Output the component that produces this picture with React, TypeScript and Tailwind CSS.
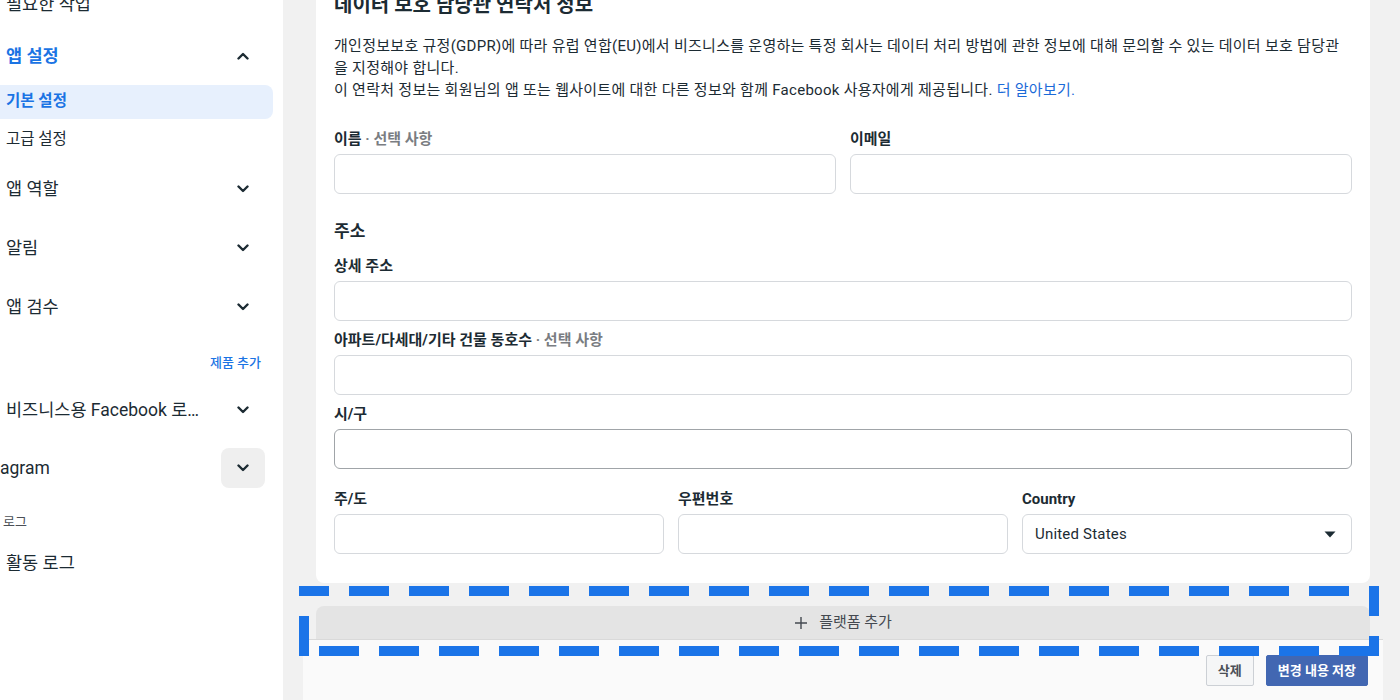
import React from "react";

const font = "font-['Roboto','Noto_Sans_CJK_KR',sans-serif]";

function Chevron({ up = false }: { up?: boolean }) {
  return (
    <svg width="12" height="8" viewBox="0 0 12 8" className={up ? "rotate-180" : ""}>
      <path d="M1.5 1.5 L6 6 L10.5 1.5" fill="none" stroke="#1c2b33" strokeWidth="2.4" strokeLinecap="round" strokeLinejoin="round" />
    </svg>
  );
}

function NavRow({
  label,
  className = "",
  box = false,
  up = false,
  textClass = "text-[17.5px] text-[#1c2b33]",
}: {
  label: string;
  className?: string;
  box?: boolean;
  up?: boolean;
  textClass?: string;
}) {
  return (
    <div className={`flex items-center justify-between pr-[18px] ${className}`}>
      <span className={`whitespace-nowrap ${textClass}`}>{label}</span>
      <div className={`w-[44px] h-[40px] flex items-center justify-center rounded-lg ${box ? "bg-[#efefef]" : ""}`}>
        <Chevron up={up} />
      </div>
    </div>
  );
}

function Label({ text, optional = false }: { text: string; optional?: boolean }) {
  return (
    <div className="h-[21px] pt-px leading-[20px] text-[15px] font-bold text-[#1c2b33] mb-[5px] whitespace-nowrap">
      {text}
      {optional && <span className="font-semibold text-[#7a7d82]"> · 선택 사항</span>}
    </div>
  );
}

function Field({ dark = false }: { dark?: boolean }) {
  return (
    <div
      className={`h-[40px] rounded-md bg-white border ${dark ? "border-[#a0a4a8]" : "border-[#d6d9dd]"}`}
    />
  );
}

function Sidebar() {
  return (
    <aside className="w-[283px] shrink-0 bg-white h-[700px] overflow-hidden">
      <div className="-mt-[8px]">
        <div className="h-[24px] pl-[6px] flex items-center text-[17.5px] text-[#1c2b33] whitespace-nowrap">필요한 작업</div>
        <NavRow
          label="앱 설정"
          up
          className="mt-[18px] h-[44px] pl-[6px]"
          textClass="text-[17.5px] font-bold text-[#1b74e4]"
        />
        <div className="mt-[7px] mr-[10px] h-[34px] rounded-r-lg bg-[#e7f0fd] pl-[6px] flex items-center text-[15.5px] font-bold text-[#1b74e4]">
          기본 설정
        </div>
        <div className="mt-[3px] h-[36px] pl-[6px] flex items-center text-[15.5px] text-[#1c2b33]">고급 설정</div>
        <NavRow label="앱 역할" className="mt-[9px] h-[44px] pl-[6px]" />
        <NavRow label="알림" className="mt-[15px] h-[44px] pl-[6px]" />
        <NavRow label="앱 검수" className="mt-[15px] h-[44px] pl-[6px]" />
        <div className="mt-[24px] h-[20px] pr-[22px] flex items-center justify-end text-[13px] font-medium text-[#1b74e4]">
          제품 추가
        </div>
        <NavRow label="비즈니스용 Facebook 로…" className="mt-[15px] h-[44px] pl-[6px]" />
        <NavRow label="agram" box className="mt-[16px] h-[40px] pl-0" />
        <div className="mt-[24px] h-[20px] pl-[3px] flex items-center text-[13px] text-[#4b4f56]">로그</div>
        <div className="mt-[9px] h-[44px] pl-[6px] flex items-center text-[17.5px] text-[#1c2b33]">활동 로그</div>
      </div>
    </aside>
  );
}

function DashOutline() {
  return (
    <svg
      className="absolute left-[16px] top-[3px] pointer-events-none"
      width="1080"
      height="70"
      viewBox="0 0 1080 70"
    >
      <g stroke="#1b74e8" strokeWidth="10" fill="none">
        <line x1="0" y1="5" x2="1080" y2="5" strokeDasharray="40 20" strokeDashoffset="10" />
        <line x1="1075" y1="0" x2="1075" y2="70" strokeDasharray="40 20" strokeDashoffset="10" />
        <line x1="1080" y1="65" x2="0" y2="65" strokeDasharray="40 20" />
        <line x1="5" y1="70" x2="5" y2="0" strokeDasharray="40 20" />
      </g>
    </svg>
  );
}

function Main() {
  return (
    <main className="flex-1 bg-[#f1f1f1] h-[700px] overflow-hidden">
      <section className="ml-[33px] mr-[30px] bg-white rounded-b-lg px-[18px] pb-[29px]">
        <h2 className="-mt-[5px] h-[20px] leading-[20px] text-[20px] font-bold text-[#1c2b33] whitespace-nowrap">
          데이터 보호 담당관 연락처 정보
        </h2>
        <p className="mt-[20px] text-[15px] tracking-[0.28px] leading-[22px] text-[#1c2b33]">
          <span className="whitespace-nowrap">
            개인정보보호 규정(GDPR)에 따라 유럽 연합(EU)에서 비즈니스를 운영하는 특정 회사는 데이터 처리 방법에 관한 정보에 대해 문의할 수 있는 데이터 보호 담당관
          </span>
          <br />
          을 지정해야 합니다.
          <br />
          이 연락처 정보는 회원님의 앱 또는 웹사이트에 대한 다른 정보와 함께 Facebook 사용자에게 제공됩니다.{" "}
          <span className="text-[#1b6ad8]">더 알아보기.</span>
        </p>

        <div className="mt-[27px] grid grid-cols-2 gap-x-[14px]">
          <div>
            <Label text="이름" optional />
            <Field />
          </div>
          <div>
            <Label text="이메일" />
            <Field />
          </div>
        </div>

        <div className="mt-[25px] h-[22px] pt-px leading-[22px] text-[17px] font-bold text-[#1c2b33]">주소</div>
        <div className="mt-[14px]">
          <Label text="상세 주소" />
          <Field />
        </div>
        <div className="mt-[8px]">
          <Label text="아파트/다세대/기타 건물 동호수" optional />
          <Field />
        </div>
        <div className="mt-[8px]">
          <Label text="시/구" />
          <Field dark />
        </div>

        <div className="mt-[19px] grid grid-cols-3 gap-x-[14px]">
          <div>
            <Label text="주/도" />
            <Field />
          </div>
          <div>
            <Label text="우편번호" />
            <Field />
          </div>
          <div>
            <Label text="Country" />
            <div className="h-[40px] rounded-md bg-white border border-[#d6d9dd] flex items-center justify-between pl-[12px] pr-[15px] text-[15px] tracking-[0.2px] text-[#1c2b33]">
              <span>United States</span>
              <svg width="12" height="7" viewBox="0 0 12 7">
                <path d="M0.5 0.5 H11.5 L6 6.5 Z" fill="#1c2b33" />
              </svg>
            </div>
          </div>
        </div>
      </section>

      <div className="relative pt-[23px]">
        <div className="ml-[33px] mr-[30px] h-[33px] rounded-t-lg bg-[#e4e4e4] flex items-center justify-center gap-[11px] text-[15px] text-[#444950]">
          <svg width="14" height="14" viewBox="0 0 14 14">
            <path d="M7 1 V13 M1 7 H13" stroke="#444950" strokeWidth="1.4" />
          </svg>
          <span>플랫폼 추가</span>
        </div>
        <div className="ml-[20px] mr-[17px] h-[80px] bg-[#fafafa] border-t border-[#d9d9d9] flex justify-end items-start gap-[12px] pr-[15px] pt-[15px]">
          <button className="h-[31px] px-[11px] rounded-[2px] border border-[#ccd0d5] bg-[#f5f6f7] text-[13px] font-bold text-[#4b4f56]">
            삭제
          </button>
          <button className="h-[31px] px-[11px] rounded-[2px] border border-[#4267b2] bg-[#4267b2] text-[13px] font-bold text-white">
            변경 내용 저장
          </button>
        </div>
        <DashOutline />
      </div>
    </main>
  );
}

export default function App() {
  return (
    <div className={`flex w-[1400px] h-[700px] overflow-hidden ${font}`}>
      <Sidebar />
      <Main />
    </div>
  );
}
